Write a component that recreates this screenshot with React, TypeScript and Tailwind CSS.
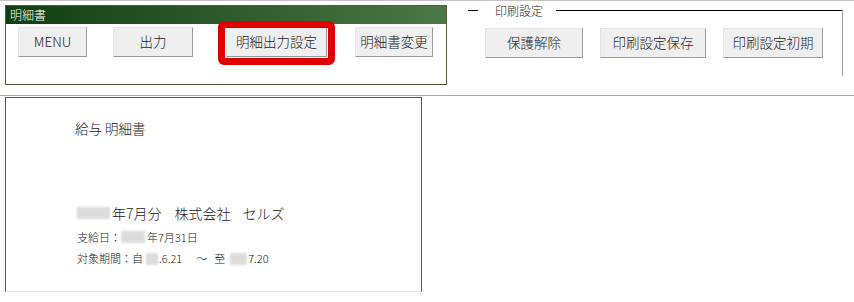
import React from 'react';

const font = { fontFamily: '"Noto Sans CJK JP", "Noto Sans", sans-serif' };

function XlButton({ label, w }: { label: string; w: string }) {
  return (
    <button
      className={`${w} h-[30px] bg-[#efefef] border-t border-l border-t-[#e4e4e4] border-l-[#e4e4e4] border-r border-b border-r-[#9a9a9a] border-b-[#9a9a9a] text-[13.5px] font-light text-[#222] leading-none`}
    >
      {label}
    </button>
  );
}

function Blur({ w }: { w: string }) {
  return <span className={`inline-block ${w} h-[12px] bg-[#dcdcdc] blur-[1px] align-middle`} />;
}

export default function App() {
  return (
    <div className="w-[854px] h-[302px] bg-white overflow-hidden text-[#222] font-light" style={font}>
      {/* Toolbar */}
      <div className="h-[96px] border-t border-t-[#c4c4c4] border-b border-b-[#a8a8a8] flex items-start">
        {/* 明細書 panel */}
        <div className="ml-[5px] mt-[4px] w-[442px] h-[80px] border border-[#55583a]">
          <div className="h-[18px] bg-gradient-to-r from-[#0f3f0f] to-[#4c7847] text-white text-[12px] leading-[18px] pl-[4px]">
            明細書
          </div>
          <div className="flex items-start pl-[12px] mt-[3px]">
            <XlButton label="MENU" w="w-[69px]" />
            <div className="ml-[26px]">
              <XlButton label="出力" w="w-[80px]" />
            </div>
            <div className="ml-[33px] relative">
              <XlButton label="明細出力設定" w="w-[101px]" />
              <div className="absolute -left-[8px] -right-[8px] -top-[6px] -bottom-[8px] border-[7px] border-[#e00000] rounded-[6px]" />
            </div>
            <div className="ml-[28px]">
              <XlButton label="明細書変更" w="w-[78px]" />
            </div>
          </div>
        </div>

        {/* 印刷設定 group */}
        <div className="ml-[21px] mt-[9px] w-[375px] h-[66px] border-r border-r-[#a0a0a0]">
          <div className="flex items-center h-px">
            <div className="w-[10px] h-px bg-black" />
            <span className="ml-[17px] text-[12px] leading-none">印刷設定</span>
            <div className="ml-[13px] flex-1 h-px bg-black" />
          </div>
          <div className="flex items-start ml-[17px] mt-[17px] gap-[17px]">
            <XlButton label="保護解除" w="w-[98px]" />
            <XlButton label="印刷設定保存" w="w-[106px]" />
            <XlButton label="印刷設定初期" w="w-[100px]" />
          </div>
        </div>
      </div>

      {/* Statement preview */}
      <div className="ml-[5px] mt-px w-[417px] h-[195px] border-l border-t border-r border-[#555] border-b border-b-[#e2e2e2] pl-[69px]">
        <div className="mt-[22px] text-[13.5px] leading-[16px]">給与 明細書</div>
        <div className="mt-[68px] pl-[2px] text-[14px] leading-[18px] flex items-center">
          <Blur w="w-[33px]" />
          <span className="ml-[2px]">年7月分</span>
          <span className="ml-[13px]">株式会社</span>
          <span className="ml-[12px]">セルズ</span>
        </div>
        <div className="mt-[8px] pl-[2px] text-[11px] leading-[14px] flex items-center">
          <span>支給日：</span>
          <Blur w="w-[24px]" />
          <span className="ml-[2px]">年7月31日</span>
        </div>
        <div className="mt-[6px] pl-[2px] text-[11px] leading-[14px] flex items-center">
          <span>対象期間：自</span>
          <span className="ml-[3px]"><Blur w="w-[12px]" /></span>
          <span className="ml-[1px]">.6.21</span>
          <span className="ml-[14px]">～</span>
          <span className="ml-[7px]">至</span>
          <span className="ml-[5px]"><Blur w="w-[17px]" /></span>
          <span className="ml-[1px]">7.20</span>
        </div>
      </div>
    </div>
  );
}
